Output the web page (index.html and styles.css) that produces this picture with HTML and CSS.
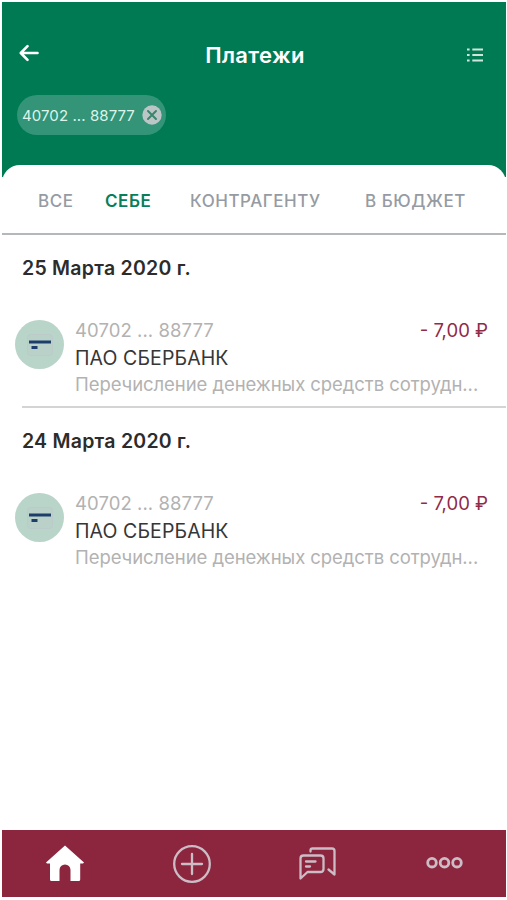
FILE: index.html
```html
<!DOCTYPE html>
<html lang="ru">
<head>
<meta charset="utf-8">
<title>Платежи</title>
<link rel="stylesheet" href="styles.css">
</head>
<body>
<div class="app">
  <header class="header">
    <div class="topbar">
      <svg class="back" width="20" height="18" viewBox="0 0 20 18"><path d="M18.500 9H2M8.500 2.200 1.800 9l6.700 6.800"/></svg>
      <h1 class="title">Платежи</h1>
      <svg class="list-icon" width="18" height="16" viewBox="0 0 18 16"><path d="M1 2.5h2.600M1 8h2.600M1 13.5h2.600M6.300 2.500h10.700M6.300 8h10.700M6.300 13.500h10.700"/></svg>
    </div>
    <div class="chip">
      <span class="chip-text">40702 ... 88777</span>
      <svg width="20" height="20" viewBox="0 0 20 20"><circle cx="10" cy="10" r="9.7" fill="#bdc6c7"/><path d="m6 6 8 8M14 6l-8 8" stroke="#38866c" stroke-width="2" stroke-linecap="round"/></svg>
    </div>
  </header>
  <main class="sheet">
    <nav class="tabs">
      <span class="tab tab-all">ВСЕ</span>
      <span class="tab tab-self active">СЕБЕ</span>
      <span class="tab tab-partner">КОНТРАГЕНТУ</span>
      <span class="tab tab-budget">В БЮДЖЕТ</span>
    </nav>
    <section class="day">
      <h2 class="date">25 Марта 2020 г.</h2>
      <article class="payment">
        <div class="avatar"><svg width="28" height="24" viewBox="0 0 28 24"><rect x="1.500" y="1.500" width="25" height="21" rx="3" fill="#b9d1c8" stroke="#bccbca"/><path d="M3 9h22" stroke="#1d3e6a" stroke-width="3"/><path d="M5.500 14.500h6" stroke="#1d3e6a" stroke-width="3"/></svg></div>
        <div class="details">
          <div class="row"><span class="account">40702 ... 88777</span><span class="amount">- 7,00 ₽</span></div>
          <div class="name">ПАО СБЕРБАНК</div>
          <div class="purpose">Перечисление денежных средств сотрудн...</div>
        </div>
      </article>
    </section>
    <section class="day">
      <h2 class="date">24 Марта 2020 г.</h2>
      <article class="payment">
        <div class="avatar"><svg width="28" height="24" viewBox="0 0 28 24"><rect x="1.500" y="1.500" width="25" height="21" rx="3" fill="#b9d1c8" stroke="#bccbca"/><path d="M3 9h22" stroke="#1d3e6a" stroke-width="3"/><path d="M5.500 14.500h6" stroke="#1d3e6a" stroke-width="3"/></svg></div>
        <div class="details">
          <div class="row"><span class="account">40702 ... 88777</span><span class="amount">- 7,00 ₽</span></div>
          <div class="name">ПАО СБЕРБАНК</div>
          <div class="purpose">Перечисление денежных средств сотрудн...</div>
        </div>
      </article>
    </section>
  </main>
  <footer class="bottom">
    <svg width="40" height="40" viewBox="0 0 40 40"><path d="M20 1.500 39 18.500 38 19.500H35.200V35.500q0 1.500-1.500 1.500H25.500V26a5.500 5.500 0 0 0-11 0v11H6.500q-1.500 0-1.500-1.500V19.500H2L1 18.500Z" fill="#fff"/></svg>
    <svg width="40" height="40" viewBox="0 0 40 40" class="line"><circle cx="20" cy="20" r="17.800"/><path d="M20 10v20M10 20h20"/></svg>
    <svg width="40" height="40" viewBox="0 0 40 40" class="line"><path d="M12.500 7.500V6.500q0-2 2-2H34q2.500 0 2.500 2.500V30.500L30.500 25.500M2.500 34.500V14.500q0-3 3-3H22.500q3 0 3 3V25q0 3-3 3H9.500L2.500 34.500M8 17.500H17.500M8 22.500H12"/></svg>
    <svg width="40" height="40" viewBox="0 0 40 40" class="line dots"><circle cx="7" cy="18.700" r="4.300"/><circle cx="19.500" cy="18.700" r="4.300"/><circle cx="32" cy="18.700" r="4.300"/></svg>
  </footer>
</div>
</body>
</html>
```
FILE: styles.css
```css
* { box-sizing: border-box; }
body {
  margin: 0;
  background: #fff;
  font-family: Inter, "Liberation Sans", sans-serif;
}
svg { display: block; flex: none; }
.app {
  width: 504px;
  height: 895px;
  margin: 2px 0 0 2px;
  display: flex;
  flex-direction: column;
  background: linear-gradient(#007a53 175px, #fff 175px);
}
.header { height: 163px; padding: 33px 22px 0 15px; }
.topbar {
  height: 40px;
  display: flex;
  align-items: center;
  justify-content: space-between;
}
.back {
  margin: 0 0 4px 2px;
  fill: none;
  stroke: #fff;
  stroke-width: 2.6;
  stroke-linecap: round;
  stroke-linejoin: round;
}
.title {
  margin: 0 0 0 5px;
  color: #fff;
  font-size: 22px;
  font-weight: 600;
  line-height: 40px;
  letter-spacing: 0.35px;
}
.list-icon { stroke: #cfe6dd; stroke-width: 2; }
.chip {
  width: 149px;
  height: 40px;
  margin-top: 20px;
  padding: 0 4px 0 5px;
  border-radius: 20px;
  background: #349477;
  display: flex;
  align-items: center;
  justify-content: space-between;
}
.chip-text {
  color: #dcf3ea;
  font-size: 15px;
  letter-spacing: 0.08px;
  white-space: nowrap;
}
.sheet {
  flex: 1;
  border-radius: 18px 18px 0 0;
  background: #fff;
}
.tabs {
  height: 70px;
  border-bottom: 2px solid #b5b8ba;
  padding: 4px 0 0 36px;
  display: flex;
  align-items: center;
  color: #969ba3;
  font-size: 17px;
  font-weight: 500;
  letter-spacing: 0.55px;
  white-space: nowrap;
}
.tab { flex: none; }
.tab-all { width: 67px; }
.tab-self { width: 85px; }
.tab-partner { width: 175px; }
.active { color: #087e59; font-weight: 600; }
.day { height: 172px; }
.day + .day .date { padding-top: 22px; }
.date {
  margin: 0;
  padding: 21px 0 0 20px;
  color: #2c2c2c;
  font-size: 19.5px;
  font-weight: 600;
  line-height: 24px;
  letter-spacing: 0.25px;
}
.payment {
  position: relative;
  display: flex;
  padding: 37px 0 0 13px;
}
.avatar {
  width: 49px;
  height: 49px;
  margin: 3px 11px 0 0;
  border-radius: 50%;
  background: #b9d4c9;
  display: flex;
  align-items: center;
  justify-content: center;
}
.details {
  flex: 1;
  font-size: 18.5px;
  line-height: 27px;
  white-space: nowrap;
}
.row {
  display: flex;
  justify-content: space-between;
  padding-right: 18px;
}
.account, .purpose { color: #b2b2b2; }
.account { letter-spacing: 0.07px; }
.amount { color: #8f2a48; }
.name {
  height: 27px;
  padding-top: 1px;
  color: #363636;
  font-size: 19.5px;
  letter-spacing: 0.1px;
}
.purpose { letter-spacing: -0.07px; }
.day:first-of-type .payment::after {
  content: "";
  position: absolute;
  left: 20px;
  right: 0;
  bottom: -10px;
  height: 2px;
  background: #d4d4d4;
}
.bottom {
  height: 67px;
  padding: 0 41px 0 43px;
  background: #8c263f;
  display: flex;
  align-items: center;
  justify-content: space-between;
}
.line {
  fill: none;
  stroke: #ccbcc5;
  stroke-width: 2.3;
  stroke-linecap: round;
  stroke-linejoin: round;
}
.dots { stroke-width: 2.8; }
```
